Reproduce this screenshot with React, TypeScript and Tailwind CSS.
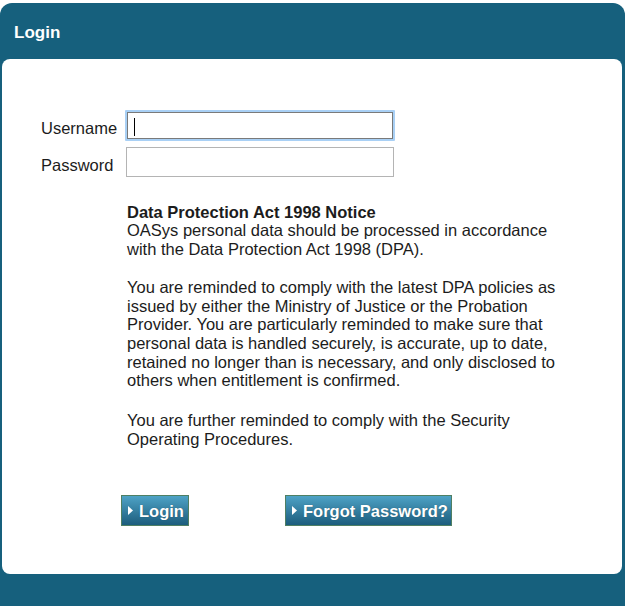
import { ReactNode } from 'react'

const font = { fontFamily: '"Liberation Sans", Arial, sans-serif' }

function Caret() {
  return (
    <svg width="5" height="9" viewBox="0 0 5 9" className="shrink-0">
      <path d="M0 0 L5 4.5 L0 9 Z" fill="#ffffff" />
    </svg>
  )
}

function NavButton({ children, width }: { children: ReactNode; width: string }) {
  return (
    <button
      className={`flex items-center gap-[6px] h-[31px] pl-[6px] border border-[#4f7f63] bg-gradient-to-b from-[#4ea3c6] to-[#1c5d7d] text-white text-[16.5px] font-bold leading-none ${width}`}
      style={font}
    >
      <Caret />
      <span className="[text-shadow:0_0_1px_rgba(0,0,0,0.35)]">{children}</span>
    </button>
  )
}

export default function App() {
  return (
    <div className="min-h-screen bg-white pt-[3px]" style={font}>
      <div className="w-[625px] h-[603px] bg-[#16607d] rounded-t-[12px] flex flex-col">
        {/* Header */}
        <div className="h-[56px] shrink-0 flex items-center pl-[14px] pt-[4px]">
          <span className="text-white text-[17px] font-bold">Login</span>
        </div>

        {/* Card */}
        <div className="ml-[2px] mr-[3px] h-[515px] bg-white rounded-[8px] pt-[51px] pl-[39px] text-[#1c1c1c]">
          <div className="grid grid-cols-[84px_270px] gap-y-[6px] items-center">
            <label className="text-[16.5px] pt-[6px]">Username</label>
            <div className="relative h-[31px] border-2 border-[#a9d0f5] rounded-[1px]">
              <input className="w-full h-full border border-[#7a7a7a] outline-none bg-white" type="text" />
              <span className="absolute left-[7px] top-[6px] w-[1px] h-[18px] bg-black" />
            </div>
            <label className="text-[16.5px] pt-[6px]">Password</label>
            <input
              className="ml-[1px] w-[268px] h-[30px] border border-[#b4b4b4] outline-none bg-white"
              type="password"
            />
          </div>

          {/* Notice */}
          <div className="ml-[86px] mt-[25px] w-[450px] text-[16.5px] leading-[18.7px]">
            <p className="font-bold">Data Protection Act 1998 Notice</p>
            <p>
              OASys personal data should be processed in accordance
              <br />
              with the Data Protection Act 1998 (DPA).
            </p>
            <p className="mt-[19px]">
              You are reminded to comply with the latest DPA policies as issued by either the
              Ministry of Justice or the Probation Provider. You are particularly reminded to make
              sure that personal data is handled securely, is accurate, up to date, retained no
              longer than is necessary, and only disclosed to others when entitlement is confirmed.
            </p>
            <p className="mt-[21px]">
              You are further reminded to comply with the Security
              <br />
              Operating Procedures.
            </p>
          </div>

          {/* Actions */}
          <div className="flex gap-[96px] ml-[80px] mt-[47px]">
            <NavButton width="w-[68px]">Login</NavButton>
            <NavButton width="w-[167px]">Forgot Password?</NavButton>
          </div>
        </div>
      </div>
    </div>
  )
}
